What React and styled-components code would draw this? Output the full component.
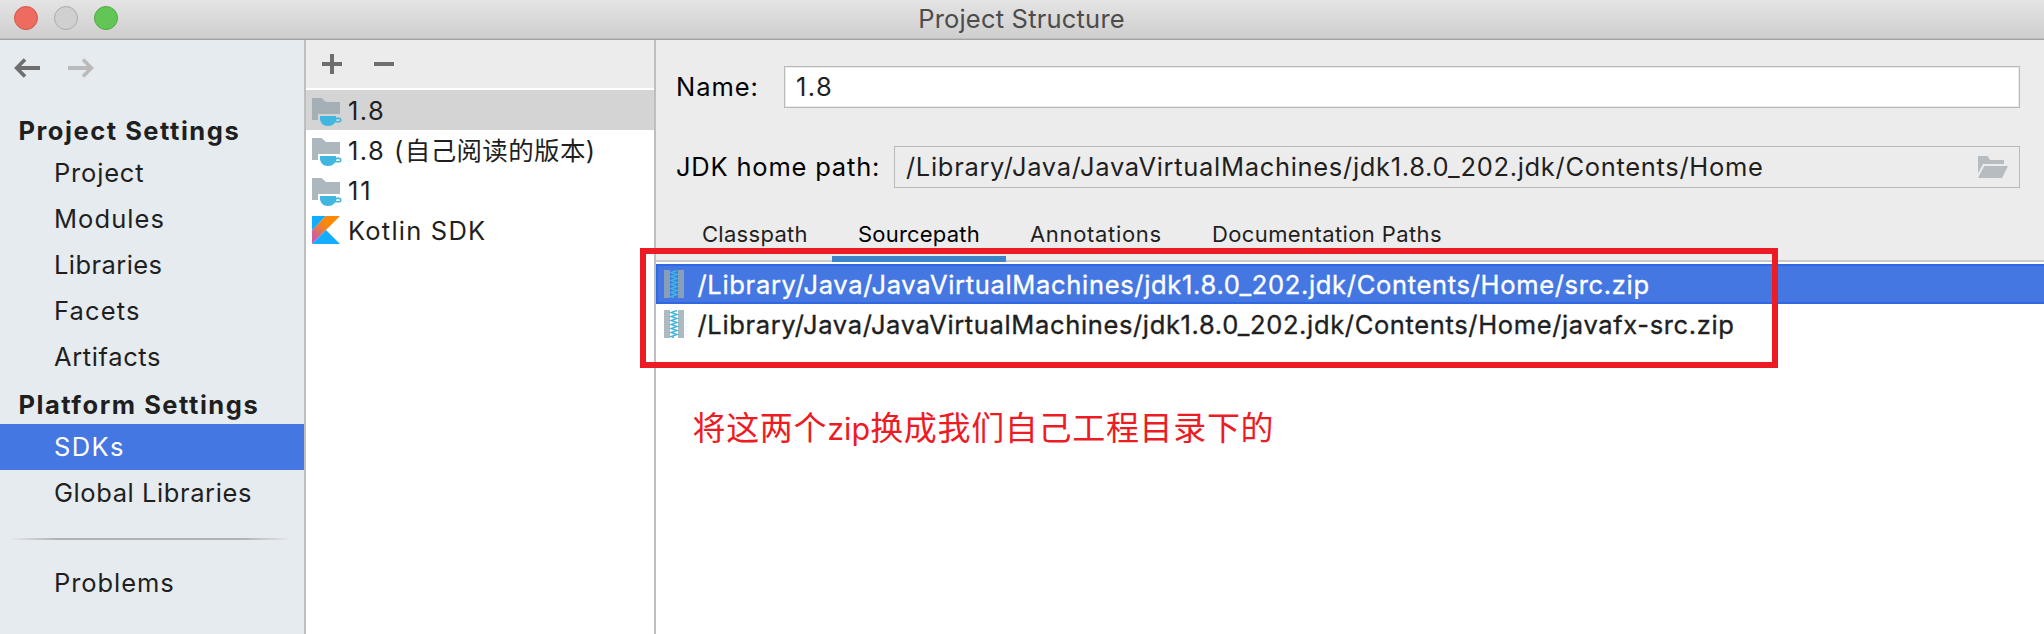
import React from 'react';
import styled, { createGlobalStyle, css } from 'styled-components';

const GlobalStyle = createGlobalStyle`
  * { box-sizing: border-box; }
  body {
    margin: 0;
    font-family: Inter, "Noto Sans CJK SC", sans-serif;
    font-size: 25.5px;
    color: #1f1f1f;
    overflow: hidden;
  }
`;

const Window = styled.div`
  position: relative;
  display: flex;
  flex-direction: column;
  width: 2044px;
  height: 634px;
  background: #ececec;
  white-space: nowrap;
`;

const TitleBar = styled.header`
  position: relative;
  display: flex;
  align-items: center;
  height: 40px;
  padding: 0 14px 3px;
  gap: 16px;
  background: linear-gradient(#e4e4e4, #cecece);
  border-bottom: 1px solid #a2a2a2;
  box-shadow: inset 0 -1px #bdbdbd;
`;

const TrafficLight = styled.span`
  width: 24px;
  height: 24px;
  border-radius: 50%;
  background: ${(p) => p.$fill};
  border: 1px solid ${(p) => p.$edge};
`;

const WindowTitle = styled.h1`
  position: absolute;
  left: 0;
  right: 1px;
  top: 0;
  margin: 0;
  text-align: center;
  font-size: 25.5px;
  font-weight: 400;
  line-height: 38px;
  letter-spacing: 0.2px;
  color: #4c4c4c;
`;

const Body = styled.main`
  display: flex;
  flex: 1;
  min-height: 0;
`;

const Label = styled.span`
  letter-spacing: ${(p) => p.$track ?? 0}px;
`;

const Sidebar = styled.nav`
  width: 306px;
  background: #e6ebef;
  border-right: 2px solid #bfbfbf;
`;

const NavArrows = styled.div`
  display: flex;
  gap: 28px;
  padding: 18px 0 28px 14px;
  svg { display: block; }
`;

const SectionTitle = styled.h2`
  margin: 0;
  height: 44px;
  padding: 5px 0 0 18.5px;
  font-size: 25.5px;
  font-weight: 700;
  line-height: 39px;
  letter-spacing: 1.53px;
`;

const SidebarItem = styled.div`
  height: 46px;
  line-height: 46px;
  padding-left: 54px;
  ${(p) => p.$selected && css`
    background: #4477e2;
    color: #fff;
  `}
`;

const Divider = styled.hr`
  height: 2px;
  margin: 22px 12px 20px 8px;
  border: 0;
  background: linear-gradient(90deg, transparent, #b2b2b4 17%, #b2b2b4 83%, transparent);
`;

const SdkColumn = styled.section`
  width: 350px;
  background: #fff;
  border-right: 2px solid #bfbfbf;
`;

const SdkToolbar = styled.div`
  display: flex;
  align-items: center;
  height: 48px;
  margin-bottom: 2px;
  padding: 0 0 0 16px;
  gap: 32px;
  background: #ececec;
  svg { display: block; }
`;

const SdkRow = styled.div`
  display: flex;
  align-items: center;
  height: 40px;
  line-height: 41px;
  padding-left: 6px;
  gap: 4px;
  background: ${(p) => (p.$selected ? '#d4d4d4' : 'transparent')};
  svg { flex: none; display: block; }
`;

const Details = styled.section`
  display: flex;
  flex-direction: column;
  flex: 1;
  min-width: 0;
  padding-top: 26px;
`;

const FormRow = styled.label`
  display: flex;
  align-items: center;
  height: 42px;
  margin: 0 24px 38px 20px;
  color: #000;
`;

const FieldLabel = styled(Label)`
  width: ${(p) => p.$width}px;
  line-height: 42px;
`;

const Field = styled.span`
  display: flex;
  align-items: center;
  justify-content: space-between;
  flex: 1;
  height: 42px;
  padding: 0 11px;
  line-height: 40px;
  color: #1f1f1f;
  border: 1px solid #b9b9b9;
  ${(p) => !p.$disabled && css`
    background: #fff;
    box-shadow: inset 0 0 0 1px #ebebeb;
  `}
  svg { display: block; }
`;

const Tabs = styled.div`
  display: flex;
  height: 50px;
  margin-top: -14px;
  padding-left: 21px;
  border-bottom: 2px solid #c9c9c9;
`;

const Tab = styled.div`
  height: 50px;
  width: ${(p) => p.$width}px;
  padding-left: ${(p) => p.$inset ?? 25}px;
  font-size: 22px;
  line-height: 44px;
  ${(p) => p.$active && css`
    color: #000;
    border-bottom: 6px solid #3f83c9;
  `}
`;

const PathList = styled.div`
  flex: 1;
  padding-top: 2px;
  background: #fff;
`;

const PathRow = styled.div`
  display: flex;
  align-items: center;
  height: 40px;
  line-height: 41px;
  padding-left: 8px;
  gap: 13.5px;
  -webkit-text-stroke: 0.35px;
  ${(p) => p.$selected && css`
    color: #fff;
    background: #4477e2;
    box-shadow: inset 2px 2px #3068e4, inset 0 -2px #3068e4;
  `}
  svg { flex: none; display: block; }
`;

const Highlight = styled.div`
  position: absolute;
  left: 640px;
  top: 248px;
  width: 1138px;
  height: 120px;
  border: 6px solid #ed1c24;
`;

const Note = styled.p`
  position: absolute;
  left: 692.5px;
  top: 402px;
  margin: 0;
  font-family: "Noto Sans CJK SC", sans-serif;
  font-size: 33px;
  line-height: 48px;
  letter-spacing: 0.68px;
  color: #ed1c24;
`;

const NoteLatin = styled.span`
  font-family: Inter, sans-serif;
  font-size: 30.5px;
  letter-spacing: 0;
`;

const ArrowIcon = ({ color, forward }) => (
  <svg width="26" height="20" viewBox="0 0 26 20" fill="none" stroke={color} strokeWidth="4">
    <g transform={forward ? 'matrix(-1 0 0 1 26 0)' : undefined}>
      <path d="M2 10H26" />
      <path d="M11 1.4L2.6 10L11 18.6" strokeWidth="3.6" />
    </g>
  </svg>
);

const PlusIcon = () => (
  <svg width="20" height="20" viewBox="0 0 20 20"><path d="M8 0h4v8h8v4h-8v8H8v-8H0V8h8z" fill="#6e6e6e" /></svg>
);

const MinusIcon = () => (
  <svg width="20" height="20" viewBox="0 0 20 20"><path d="M0 8h20v4H0z" fill="#6e6e6e" /></svg>
);

const JdkIcon = () => (
  <svg width="32" height="32" viewBox="0 -4 32 32">
    <path d="M0 0H9.5L14 4H28V16H6V22H0z" fill="#9aa7b0" fillOpacity="0.82" />
    <path
      d="M8 18H24V19.500H27a2.500 2.500 0 0 1 0 5H23C21.500 27 19 28 16 28C11 28 8 24.500 8 20zM24.500 21.200L24 23H27a.9.9 0 0 0 0-1.800z"
      fill="#40b6e0"
      fillRule="evenodd"
    />
  </svg>
);

const KotlinIcon = () => (
  <svg width="32" height="28" viewBox="0 0 32 28">
    <defs>
      <linearGradient id="kotlin" x1="0" y1="28" x2="21" y2="3" gradientUnits="userSpaceOnUse">
        <stop offset="0" stopColor="#c757bc" />
        <stop offset="0.25" stopColor="#d0609a" />
        <stop offset="0.6" stopColor="#f0802a" />
        <stop offset="0.8" stopColor="#ff8900" />
      </linearGradient>
    </defs>
    <path d="M0 0H14L0 14.500z" fill="#12adff" />
    <path d="M14 0H28L0 28V14.500z" fill="url(#kotlin)" />
    <path d="M0 28L14 14L28 28z" fill="#12adff" />
  </svg>
);

const ZipIcon = () => (
  <svg width="20" height="28" viewBox="0 0 20 28">
    <path d="M0 0H6V28H0zM14 0H20V28H14z" fill="#9aa7b0" fillOpacity="0.8" />
    <path
      d="M13 .5L7 2.500L13 4.500L7 6.500L13 8.500L7 10.500L13 12.500L7 14.500L13 16.500L7 18.500L13 20.500L7 22.500L13 24.500L7 26.500L10 27.500"
      fill="none"
      stroke="#40b6e0"
      strokeWidth="1.4"
    />
  </svg>
);

const OpenFolderIcon = () => (
  <svg width="30" height="22" viewBox="0 0 30 22" fill="#b7bcc0">
    <path d="M0 0H9.500L12 4H26V8H5L0 17.500z" />
    <path d="M6.200 10H30L24 22H0z" />
  </svg>
);

const projectItems = [
  ['Project', 0.8],
  ['Modules', 1.07],
  ['Libraries', 0.42],
  ['Facets', 1.14],
  ['Artifacts', 0.61],
];

const HOME = '/Library/Java/JavaVirtualMachines/jdk1.8.0_202.jdk/Contents/Home';

export default function App() {
  return (
    <>
      <GlobalStyle />
      <Window>
        <TitleBar>
          <TrafficLight $fill="#ed6b5f" $edge="#d65548" />
          <TrafficLight $fill="#d0d0d0" $edge="#ababab" />
          <TrafficLight $fill="#62c656" $edge="#4fab40" />
          <WindowTitle>Project Structure</WindowTitle>
        </TitleBar>
        <Body>
          <Sidebar>
            <NavArrows>
              <ArrowIcon color="#6e6e6e" />
              <ArrowIcon color="#bababa" forward />
            </NavArrows>
            <SectionTitle>Project Settings</SectionTitle>
            {projectItems.map(([name, track]) => (
              <SidebarItem key={name}><Label $track={track}>{name}</Label></SidebarItem>
            ))}
            <SectionTitle>Platform Settings</SectionTitle>
            <SidebarItem $selected><Label $track={1.37}>SDKs</Label></SidebarItem>
            <SidebarItem><Label $track={0.58}>Global Libraries</Label></SidebarItem>
            <Divider />
            <SidebarItem><Label $track={0.92}>Problems</Label></SidebarItem>
          </Sidebar>

          <SdkColumn>
            <SdkToolbar>
              <PlusIcon />
              <MinusIcon />
            </SdkToolbar>
            <SdkRow $selected><JdkIcon /><Label $track={1.43}>1.8</Label></SdkRow>
            <SdkRow>
              <JdkIcon />
              <span>
                <Label $track={1.48}>1.8 (</Label>
                <Label $track={0.35}>自己阅读的版本)</Label>
              </span>
            </SdkRow>
            <SdkRow><JdkIcon /><Label $track={2}>11</Label></SdkRow>
            <SdkRow><KotlinIcon /><Label $track={1.21}>Kotlin SDK</Label></SdkRow>
          </SdkColumn>

          <Details>
            <FormRow>
              <FieldLabel $width={108} $track={0.95}>Name:</FieldLabel>
              <Field><Label $track={1.43}>1.8</Label></Field>
            </FormRow>
            <FormRow>
              <FieldLabel $width={218} $track={0.8}>JDK home path:</FieldLabel>
              <Field $disabled>
                <Label $track={0.685}>{HOME}</Label>
                <OpenFolderIcon />
              </Field>
            </FormRow>
            <Tabs>
              <Tab $width={155}><Label $track={0.29}>Classpath</Label></Tab>
              <Tab $width={174} $inset={26} $active><Label $track={0.2}>Sourcepath</Label></Tab>
              <Tab $width={181} $inset={24}><Label $track={0.68}>Annotations</Label></Tab>
              <Tab $width={280}><Label $track={0.39}>Documentation Paths</Label></Tab>
            </Tabs>
            <PathList>
              <PathRow $selected><ZipIcon /><Label $track={0.68}>{HOME}/src.zip</Label></PathRow>
              <PathRow><ZipIcon /><Label $track={0.64}>{HOME}/javafx-src.zip</Label></PathRow>
            </PathList>
          </Details>
        </Body>
        <Highlight />
        <Note>将这两个<NoteLatin>zip</NoteLatin>换成我们自己工程目录下的</Note>
      </Window>
    </>
  );
}
